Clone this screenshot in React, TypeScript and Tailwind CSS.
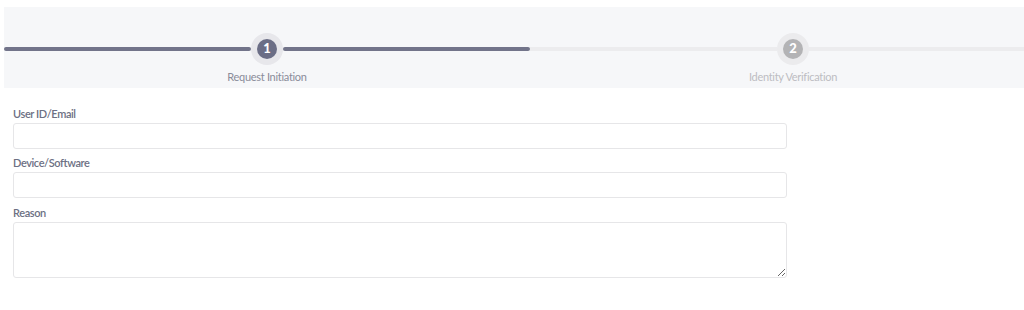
const steps = [
	{ num: 1, label: "Request Initiation", active: true },
	{ num: 2, label: "Identity Verification", active: false },
];

const App = () => {
	return (
		<div className="w-[1024px] h-[310px] overflow-hidden bg-white" style={{ fontFamily: 'Lato, "Open Sans", sans-serif' }}>
			{/* Stepper */}
			<div className="ml-[4px] mt-[7px] w-[1052px] bg-[#f6f7f9] grid grid-cols-2 pt-[26px] pb-[3px]">
				{steps.map((step) => (
					<div key={step.num} className="flex flex-col">
						<div className="flex flex-row items-center">
							<div className={step.active ? "flex-1 h-[4px] rounded-full bg-[#72748a]" : "flex-1 h-[4px] bg-[#ececee]"} />
							<div className={step.active ? "w-[32px] h-[32px] rounded-full bg-[#e7e7eb] flex items-center justify-center" : "w-[32px] h-[32px] rounded-full bg-[#ebebed] flex items-center justify-center"}>
								<div className={step.active ? "w-[20px] h-[20px] rounded-full bg-[#6b6e86] text-white text-[13px] font-black flex items-center justify-center" : "w-[20px] h-[20px] rounded-full bg-[#b3b3b5] text-white text-[13px] font-black flex items-center justify-center"}>
									{step.num}
								</div>
							</div>
							<div className={step.active ? "flex-1 h-[4px] rounded-full bg-[#72748a]" : "flex-1 h-[4px] bg-[#ececee]"} />
						</div>
						<span className={step.active ? "mt-[4px] text-center text-[11px] tracking-[-0.3px] leading-[16px] text-[#8a8c99]" : "mt-[4px] text-center text-[11px] tracking-[-0.3px] leading-[16px] text-[#bdbdc2]"}>
							{step.label}
						</span>
					</div>
				))}
			</div>

			{/* Form */}
			<div className="ml-[13px] mt-[17px] w-[774px] flex flex-col">
				<label className="text-[11px] tracking-[-0.4px] leading-[17px] mb-[1px] font-semibold text-[#6c7083]">User ID/Email</label>
				<input type="text" className="h-[26px] border border-[#e6e6e8] rounded-[3px] px-2 text-[12px] outline-none" />

				<label className="mt-[5px] text-[11px] tracking-[-0.4px] leading-[17px] mb-[1px] font-semibold text-[#6c7083]">Device/Software</label>
				<input type="text" className="h-[26px] border border-[#e6e6e8] rounded-[3px] px-2 text-[12px] outline-none" />

				<label className="mt-[6px] text-[11px] tracking-[-0.4px] leading-[17px] mb-[1px] font-semibold text-[#6c7083]">Reason</label>
				<textarea className="h-[56px] border border-[#e6e6e8] rounded-[3px] px-2 py-1 text-[12px] outline-none" />
			</div>
		</div>
	);
};

export default App;
